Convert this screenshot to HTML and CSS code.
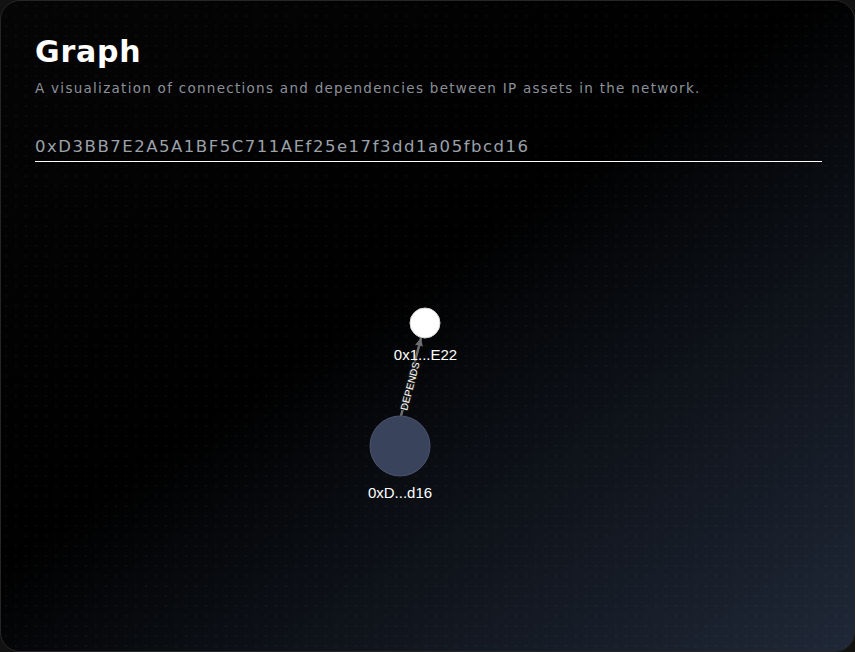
FILE: index.html
```html
<!DOCTYPE html>
<html>
<head>
<meta charset="utf-8">
<link rel="stylesheet" href="styles.css">
</head>
<body>
<main class="card">
  <svg class="graph" width="855" height="652" viewBox="0 0 855 652">
    <defs>
      <marker id="arrow" viewBox="0 0 10 10" refX="10" refY="5" markerWidth="3.2" markerHeight="3.2" orient="auto">
        <path d="M0 0 L10 5 L0 10 z" fill="#6e6e6e"/>
      </marker>
    </defs>
    <line x1="401" y1="416" x2="421" y2="338" stroke="#6e6e6e" stroke-width="2.5" marker-end="url(#arrow)"/>
    <g transform="translate(410 386) rotate(-75)">
      <text class="edge-label" text-anchor="middle" dy="3.5">DEPENDS</text>
    </g>
    <circle cx="425" cy="323" r="15" fill="#fff" stroke="#d8d8d8" stroke-width="1"/>
    <circle cx="400" cy="446" r="30" fill="#3a435c" stroke="#4a5470" stroke-width="1"/>
    <text class="node-label" x="425.5" y="360" text-anchor="middle">0x1...E22</text>
    <text class="node-label" x="400" y="498" text-anchor="middle">0xD...d16</text>
  </svg>
  <header class="header">
    <h1 class="title">Graph</h1>
    <p class="subtitle">A visualization of connections and dependencies between IP assets in the network.</p>
  </header>
  <div class="search">
    <span class="search-text">0xD3BB7E2A5A1BF5C711AEf25e17f3dd1a05fbcd16</span>
  </div>
</main>
</body>
</html>
```
FILE: styles.css
```css
* { box-sizing: border-box; }
html, body { margin: 0; padding: 0; background: #121212; }
body { width: 855px; height: 652px; overflow: hidden; }

.card {
  position: relative;
  width: 855px;
  height: 652px;
  border: 1px solid #262626;
  border-radius: 20px;
  overflow: hidden;
  padding: 33px 32px 0 34px;
  background:
    radial-gradient(circle, rgba(255,255,255,0.035) 0.8px, transparent 1.2px) 0 0 / 10px 10px,
    linear-gradient(145deg, #050505 0%, #000 45%, #0e1219 68%, #1f2837 100%);
  font-family: "DejaVu Sans", Inter, sans-serif;
}

.graph {
  position: absolute;
  left: -1px;
  top: -1px;
}

.header, .search { position: relative; }

.title {
  margin: 0;
  font-size: 30px;
  font-weight: 700;
  color: #fff;
  line-height: 36px;
  letter-spacing: 0.8px;
}

.subtitle {
  margin: 9px 0 0;
  font-size: 13.5px;
  color: #8b9098;
  letter-spacing: 1.28px;
  line-height: 18px;
}

.search {
  margin-top: 38px;
  border-bottom: 1px solid #fff;
  padding-bottom: 2px;
}

.search-text {
  font-size: 16.5px;
  color: #9ba1a9;
  letter-spacing: 1.52px;
  line-height: 24px;
}

.node-label {
  font-family: "Liberation Sans", Arial, sans-serif;
  font-size: 15px;
  fill: #fff;
}

.edge-label {
  font-family: "Liberation Sans", Arial, sans-serif;
  font-size: 10px;
  fill: #fff;
  stroke: #1a1a1a;
  stroke-width: 2.2px;
  paint-order: stroke;
  letter-spacing: 0.2px;
}
```
